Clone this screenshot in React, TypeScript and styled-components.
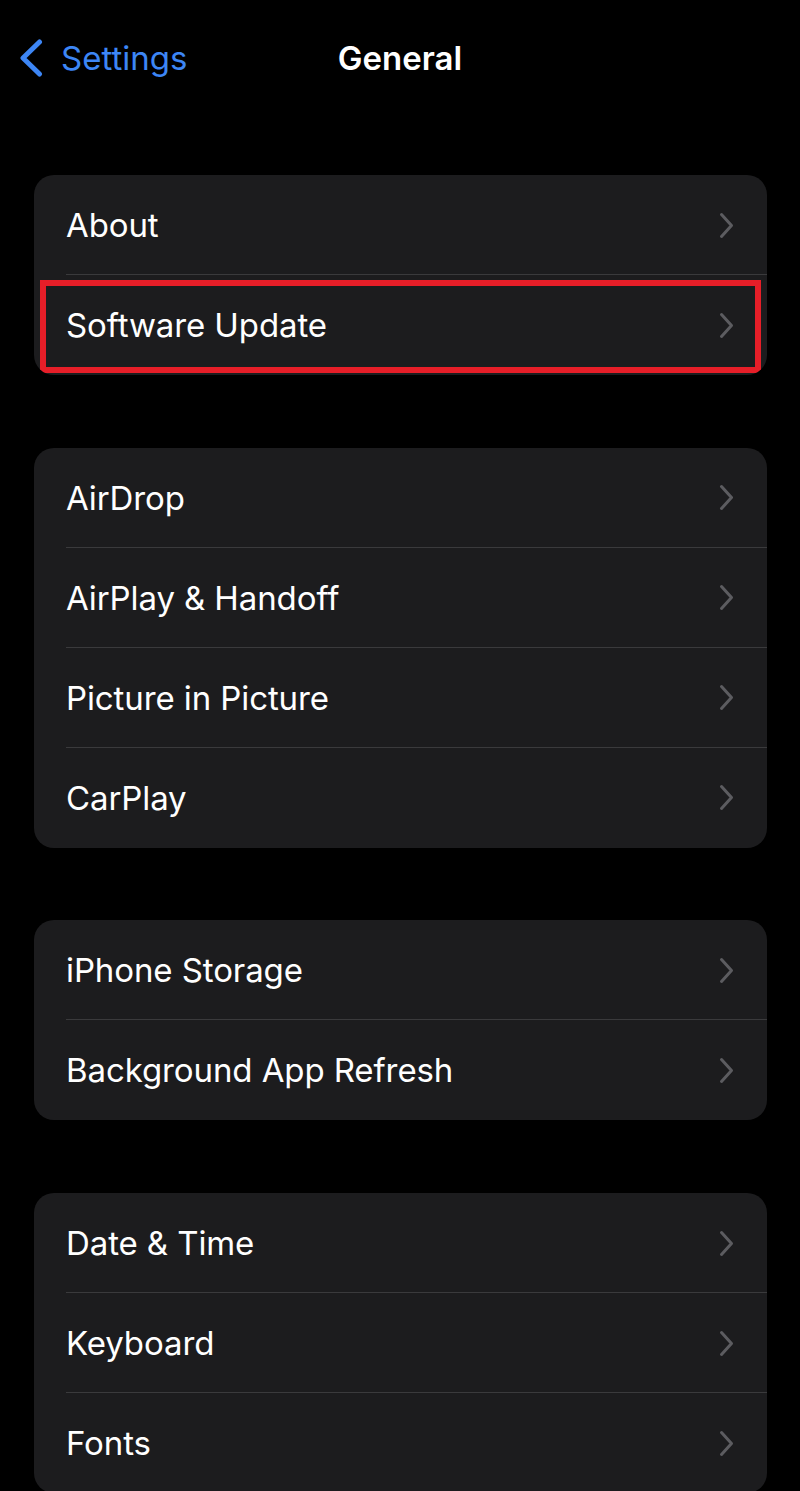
import React from "react";
import styled, { createGlobalStyle } from "styled-components";

const Global = createGlobalStyle`
  html, body {
    margin: 0;
    padding: 0;
    background: #000;
    height: 1491px;
    overflow: hidden;
  }
  body {
    font-family: Inter, "Noto Sans", "Liberation Sans", sans-serif;
    -webkit-font-smoothing: antialiased;
  }
`;

const Page = styled.div`
  width: 800px;
  height: 1491px;
  background: #000;
  overflow: hidden;
`;

const NavBar = styled.header`
  height: 116px;
  display: grid;
  grid-template-columns: 1fr auto 1fr;
  align-items: center;
`;

const BackButton = styled.div`
  display: flex;
  align-items: center;
  gap: 18px;
  padding-left: 19px;
  color: #3d86f5;
  font-size: 33px;
  font-weight: 400;
`;

const Title = styled.h1`
  margin: 0;
  color: #fff;
  font-size: 33px;
  font-weight: 600;
`;

const List = styled.main`
  display: flex;
  flex-direction: column;
  gap: 72.7px;
  padding: 59px 33px 0 34px;
`;

const Group = styled.section`
  background: #1c1c1e;
  border-radius: 20px;
  overflow: hidden;
`;

const Row = styled.div`
  position: relative;
  height: 100px;
  display: flex;
  align-items: center;
  padding-left: 32px;
  padding-right: 33px;
  box-sizing: border-box;

  & + &::before {
    content: "";
    position: absolute;
    top: -1px;
    left: 32px;
    right: 0;
    height: 1px;
    background: #3a3a3c;
  }
`;

const Label = styled.span`
  flex: 1;
  color: #fff;
  font-size: 33px;
  font-weight: 400;
  letter-spacing: -0.1px;
`;

const Highlight = styled.div`
  position: absolute;
  top: 5px;
  left: 6px;
  right: 6px;
  bottom: 2px;
  border: 6px solid #e61e28;
  pointer-events: none;
`;

const BackChevron = () => (
  <svg width="24" height="38" viewBox="0 0 24 38" aria-hidden>
    <polyline
      points="20.5,3 4,19 20.5,35"
      fill="none"
      stroke="#3d86f5"
      strokeWidth="5"
      strokeLinecap="round"
      strokeLinejoin="round"
    />
  </svg>
);

const Chevron = () => (
  <svg width="15" height="27" viewBox="0 0 15 27" aria-hidden>
    <polyline
      points="2.5,2.5 12.5,13.5 2.5,24.5"
      fill="none"
      stroke="#5c5c60"
      strokeWidth="3"
      strokeLinecap="round"
      strokeLinejoin="round"
    />
  </svg>
);

const groups: { label: string; highlight?: boolean }[][] = [
  [{ label: "About" }, { label: "Software Update", highlight: true }],
  [
    { label: "AirDrop" },
    { label: "AirPlay & Handoff" },
    { label: "Picture in Picture" },
    { label: "CarPlay" },
  ],
  [{ label: "iPhone Storage" }, { label: "Background App Refresh" }],
  [{ label: "Date & Time" }, { label: "Keyboard" }, { label: "Fonts" }],
];

export default function App() {
  return (
    <Page>
      <Global />
      <NavBar>
        <BackButton>
          <BackChevron />
          <span>Settings</span>
        </BackButton>
        <Title>General</Title>
        <div />
      </NavBar>
      <List>
        {groups.map((g, gi) => (
          <Group key={gi}>
            {g.map((r) => (
              <Row key={r.label}>
                <Label>{r.label}</Label>
                <Chevron />
                {r.highlight && <Highlight />}
              </Row>
            ))}
          </Group>
        ))}
      </List>
    </Page>
  );
}
